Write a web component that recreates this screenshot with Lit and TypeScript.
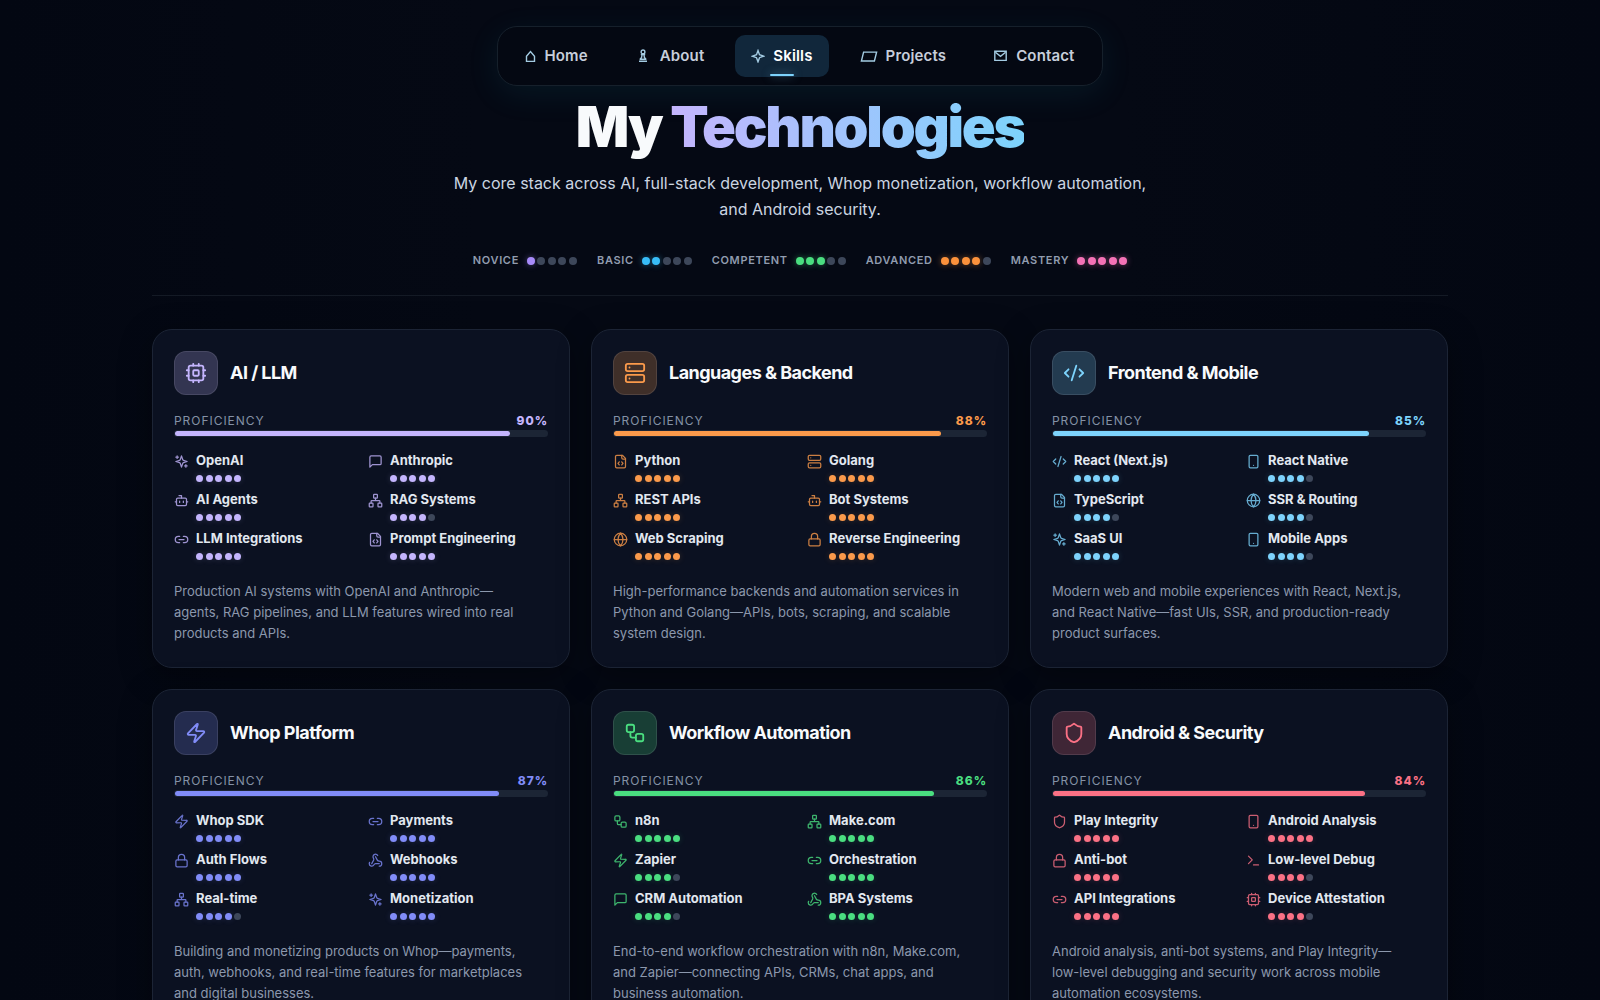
import { LitElement, html, css, svg, type SVGTemplateResult } from "lit";
import { customElement, property } from "lit/decorators.js";

const icons = {
  cpu: svg`<rect x="4" y="4" width="16" height="16" rx="2"/><rect x="9" y="9" width="6" height="6" rx="1"/><path d="M15 2v2M15 20v2M2 15h2M2 9h2M20 15h2M20 9h2M9 2v2M9 20v2"/>`,
  server: svg`<rect x="2" y="2" width="20" height="8" rx="2"/><rect x="2" y="14" width="20" height="8" rx="2"/><path d="M6 6h.01M6 18h.01"/>`,
  code: svg`<path d="m18 16 4-4-4-4"/><path d="m6 8-4 4 4 4"/><path d="m14.5 4-5 16"/>`,
  zap: svg`<path d="M4 14a1 1 0 0 1-.78-1.63l9.9-10.2a.5.5 0 0 1 .86.46l-1.92 6.02A1 1 0 0 0 13 10h7a1 1 0 0 1 .78 1.63l-9.9 10.2a.5.5 0 0 1-.86-.46l1.92-6.02A1 1 0 0 0 11 14z"/>`,
  workflow: svg`<rect x="3" y="3" width="8" height="8" rx="2"/><path d="M7 11v4a2 2 0 0 0 2 2h4"/><rect x="13" y="13" width="8" height="8" rx="2"/>`,
  shield: svg`<path d="M20 13c0 5-3.5 7.5-7.66 8.95a1 1 0 0 1-.67-.01C7.5 20.5 4 18 4 13V6a1 1 0 0 1 1-1c2 0 4.5-1.2 6.24-2.72a1.17 1.17 0 0 1 1.52 0C14.51 3.81 17 5 19 5a1 1 0 0 1 1 1z"/>`,
  sparkles: svg`<path d="m12 3-1.912 5.813a2 2 0 0 1-1.275 1.275L3 12l5.813 1.912a2 2 0 0 1 1.275 1.275L12 21l1.912-5.813a2 2 0 0 1 1.275-1.275L21 12l-5.813-1.912a2 2 0 0 1-1.275-1.275L12 3Z"/><path d="M5 3v4M19 17v4M3 5h4M17 19h4"/>`,
  message: svg`<path d="M21 15a2 2 0 0 1-2 2H7l-4 4V5a2 2 0 0 1 2-2h14a2 2 0 0 1 2 2z"/>`,
  bot: svg`<path d="M12 8V4H8"/><rect x="4" y="8" width="16" height="12" rx="2"/><path d="M2 14h2M20 14h2M15 13v2M9 13v2"/>`,
  network: svg`<rect x="16" y="16" width="6" height="6" rx="1"/><rect x="2" y="16" width="6" height="6" rx="1"/><rect x="9" y="2" width="6" height="6" rx="1"/><path d="M5 16v-3a1 1 0 0 1 1-1h12a1 1 0 0 1 1 1v3M12 12V8"/>`,
  link: svg`<path d="M9 17H7A5 5 0 0 1 7 7h2M15 7h2a5 5 0 1 1 0 10h-2M8 12h8"/>`,
  file: svg`<path d="M10 12.5 8 15l2 2.5M14 12.5l2 2.5-2 2.5"/><path d="M14 2v4a2 2 0 0 0 2 2h4"/><path d="M15 2H6a2 2 0 0 0-2 2v16a2 2 0 0 0 2 2h12a2 2 0 0 0 2-2V7z"/>`,
  globe: svg`<circle cx="12" cy="12" r="10"/><path d="M12 2a14.5 14.5 0 0 0 0 20 14.5 14.5 0 0 0 0-20M2 12h20"/>`,
  lock: svg`<rect x="3" y="11" width="18" height="11" rx="2"/><path d="M7 11V7a5 5 0 0 1 10 0v4"/>`,
  phone: svg`<rect x="5" y="2" width="14" height="20" rx="2"/><path d="M12 18h.01"/>`,
  webhook: svg`<path d="M18 16.98h-5.99c-1.1 0-1.95.94-2.48 1.9A4 4 0 0 1 2 17c.01-.7.2-1.4.57-2"/><path d="m6 17 3.13-5.78c.53-.97.1-2.18-.5-3.1a4 4 0 1 1 6.89-4.06"/><path d="m12 6 3.13 5.73C15.66 12.7 16.9 13 18 13a4 4 0 0 1 0 8"/>`,
  terminal: svg`<path d="m4 17 6-6-6-6M12 19h8"/>`,
};

type IconName = keyof typeof icons;
type Skill = [icon: IconName, name: string, level: number];

interface Category {
  tone: string;
  icon: IconName;
  title: string;
  percent: number;
  skills: Skill[];
  text: string;
}

const categories: Category[] = [
  {
    tone: "violet",
    icon: "cpu",
    title: "AI / LLM",
    percent: 90,
    skills: [
      ["sparkles", "OpenAI", 5],
      ["message", "Anthropic", 5],
      ["bot", "AI Agents", 5],
      ["network", "RAG Systems", 4],
      ["link", "LLM Integrations", 5],
      ["file", "Prompt Engineering", 5],
    ],
    text: "Production AI systems with OpenAI and Anthropic—agents, RAG pipelines, and LLM features wired into real products and APIs.",
  },
  {
    tone: "orange",
    icon: "server",
    title: "Languages & Backend",
    percent: 88,
    skills: [
      ["file", "Python", 5],
      ["server", "Golang", 5],
      ["network", "REST APIs", 5],
      ["bot", "Bot Systems", 5],
      ["globe", "Web Scraping", 5],
      ["lock", "Reverse Engineering", 5],
    ],
    text: "High-performance backends and automation services in Python and Golang—APIs, bots, scraping, and scalable system design.",
  },
  {
    tone: "sky",
    icon: "code",
    title: "Frontend & Mobile",
    percent: 85,
    skills: [
      ["code", "React (Next.js)", 5],
      ["phone", "React Native", 4],
      ["file", "TypeScript", 4],
      ["globe", "SSR & Routing", 4],
      ["sparkles", "SaaS UI", 5],
      ["phone", "Mobile Apps", 4],
    ],
    text: "Modern web and mobile experiences with React, Next.js, and React Native—fast UIs, SSR, and production-ready product surfaces.",
  },
  {
    tone: "indigo",
    icon: "zap",
    title: "Whop Platform",
    percent: 87,
    skills: [
      ["zap", "Whop SDK", 5],
      ["link", "Payments", 5],
      ["lock", "Auth Flows", 5],
      ["webhook", "Webhooks", 5],
      ["network", "Real-time", 4],
      ["sparkles", "Monetization", 5],
    ],
    text: "Building and monetizing products on Whop—payments, auth, webhooks, and real-time features for marketplaces and digital businesses.",
  },
  {
    tone: "green",
    icon: "workflow",
    title: "Workflow Automation",
    percent: 86,
    skills: [
      ["workflow", "n8n", 5],
      ["network", "Make.com", 5],
      ["zap", "Zapier", 4],
      ["link", "Orchestration", 5],
      ["message", "CRM Automation", 4],
      ["webhook", "BPA Systems", 5],
    ],
    text: "End-to-end workflow orchestration with n8n, Make.com, and Zapier—connecting APIs, CRMs, chat apps, and business automation.",
  },
  {
    tone: "rose",
    icon: "shield",
    title: "Android & Security",
    percent: 84,
    skills: [
      ["shield", "Play Integrity", 5],
      ["phone", "Android Analysis", 5],
      ["lock", "Anti-bot", 5],
      ["terminal", "Low-level Debug", 4],
      ["link", "API Integrations", 5],
      ["cpu", "Device Attestation", 4],
    ],
    text: "Android analysis, anti-bot systems, and Play Integrity—low-level debugging and security work across mobile automation ecosystems.",
  },
];

const levels: [label: string, tone: string][] = [
  ["Novice", "novice"],
  ["Basic", "basic"],
  ["Competent", "competent"],
  ["Advanced", "advanced"],
  ["Mastery", "mastery"],
];

/** Menu symbols share a 14px height; each one has its own width. */
const links: [label: string, width: number, shape: SVGTemplateResult][] = [
  ["Home", 11, svg`<path d="M1.5 7.2 5.5 2.6l4 4.6v5.2h-8z"/>`],
  [
    "About",
    17,
    svg`<circle cx="8" cy="2.9" r="1.9"/><path d="M5.8 5.6h4.4M7 6l-.4 2.4L5 10.2M9 6l.4 2.4 1.6 1.8M4.6 10.3h6.8M4 12.3h8"/>`,
  ],
  ["Skills", 14, svg`<path d="M7 1.6 8.5 5.7 12.6 7.2 8.5 8.7 7 12.8 5.5 8.7 1.4 7.2 5.5 5.7z"/>`],
  ["Projects", 18, svg`<path d="M3.6 3.1h13L14.4 12h-13z"/>`],
  ["Contact", 15, svg`<path d="M1.8 2.2h11.4v9.2H1.8z"/><path d="m2.4 3.2 5.1 4.2 5.1-4.2"/>`],
];

@customElement("line-icon")
export class LineIcon extends LitElement {
  @property() name: IconName = "cpu";

  static styles = css`
    :host { display: block; }
    .icon { display: block; width: 100%; height: 100%; }
  `;

  render() {
    return html`<svg class="icon" viewBox="0 0 24 24" fill="none" stroke="currentColor"
      stroke-width="2" stroke-linecap="round" stroke-linejoin="round" aria-hidden="true">${icons[this.name]}</svg>`;
  }
}

/** Five dots, coloured with the current text colour up to the level. */
@customElement("level-dots")
export class LevelDots extends LitElement {
  @property({ type: Number }) level = 0;

  static styles = css`
    :host {
      --dot: 7px;
      --glow: 20%;
      display: flex;
      justify-content: space-between;
      width: 45px;
    }
    .dot {
      width: var(--dot);
      height: var(--dot);
      border-radius: 50%;
      background: #3d475a;
    }
    .dot.on {
      background: currentColor;
      box-shadow: 0 0 6px color-mix(in srgb, currentColor var(--glow), transparent);
    }
  `;

  render() {
    return [1, 2, 3, 4, 5].map((n) => html`<span class="dot ${n <= this.level ? "on" : ""}"></span>`);
  }
}

@customElement("skill-card")
export class SkillCard extends LitElement {
  @property({ attribute: false }) data!: Category;

  static styles = css`
    :host { display: grid; }
    .card {
      box-sizing: border-box;
      padding: 21px;
      border: 1px solid #1c2435;
      border-radius: 20px;
      background: #0b1121;
      box-shadow: 0 8px 32px rgba(0, 0, 0, 0.35);
    }
    .violet { --tone: #c4b5fd; }
    .orange { --tone: #fb9a4b; }
    .sky { --tone: #7dd3fc; }
    .indigo { --tone: #818cf8; }
    .green { --tone: #4ade80; }
    .rose { --tone: #fb7185; }
    .head {
      display: flex;
      align-items: center;
      gap: 12px;
      margin-bottom: 16px;
    }
    .badge {
      display: grid;
      place-items: center;
      box-sizing: border-box;
      width: 44px;
      height: 44px;
      border: 1px solid rgba(255, 255, 255, 0.1);
      border-radius: 12px;
      color: var(--tone);
      background: color-mix(in srgb, var(--tone) 22%, transparent);
    }
    .badge line-icon { width: 22px; height: 22px; }
    .title {
      margin: 0;
      font-size: 18px;
      line-height: 24px;
      font-weight: 700;
      letter-spacing: -0.03em;
      color: #f8fafc;
    }
    .meter-row {
      display: flex;
      justify-content: space-between;
      font-size: 12px;
      line-height: 19px;
      letter-spacing: 0.08em;
      color: #8491a6;
    }
    .percent { font-weight: 800; color: var(--tone); }
    .track {
      box-sizing: border-box;
      height: 7px;
      padding: 1px;
      border-radius: 4px;
      background: #1c2535;
    }
    .fill {
      height: 5px;
      border-radius: 3px;
      background: var(--tone);
    }
    .skills {
      display: grid;
      grid-template-columns: 1fr 1fr;
      gap: 8px 14px;
      margin: 14px 0 21px;
      padding: 0;
      list-style: none;
    }
    .skill { display: flex; gap: 7px; }
    .skill line-icon {
      width: 15px;
      height: 15px;
      margin-top: 3px;
      color: var(--tone);
      opacity: 0.8;
    }
    .skill-body { display: grid; gap: 6px; }
    .skill-name {
      font-size: 13px;
      line-height: 18px;
      font-weight: 700;
      color: #e2e8f0;
      white-space: nowrap;
    }
    .skill level-dots { color: var(--tone); }
    .text {
      margin: 0;
      padding: 0 14px 2px 0;
      font-size: 13px;
      line-height: 21px;
      color: #8c98ad;
    }
  `;

  render() {
    const { tone, icon, title, percent, skills, text } = this.data;
    return html`
      <article class="card ${tone}">
        <header class="head">
          <span class="badge"><line-icon .name=${icon}></line-icon></span>
          <h2 class="title">${title}</h2>
        </header>
        <div class="meter-row">
          <span>PROFICIENCY</span><span class="percent">${percent}%</span>
        </div>
        <div class="track"><div class="fill" style="width:${percent}%"></div></div>
        <ul class="skills">
          ${skills.map(
            ([glyph, name, level]) => html`
              <li class="skill">
                <line-icon .name=${glyph}></line-icon>
                <div class="skill-body">
                  <span class="skill-name">${name}</span>
                  <level-dots .level=${level}></level-dots>
                </div>
              </li>`,
          )}
        </ul>
        <p class="text">${text}</p>
      </article>
    `;
  }
}

@customElement("app-root")
export class AppRoot extends LitElement {
  static styles = css`
    :host {
      display: block;
      min-height: 100vh;
      font-family: Inter, "Liberation Sans", sans-serif;
      color: #f8fafc;
      background: linear-gradient(90deg, #030712 0%, #050914 30%, #050914 70%, #030712 100%);
    }
    .page {
      display: flex;
      flex-direction: column;
      align-items: center;
      box-sizing: border-box;
      padding: 26px 24px 40px;
    }
    .nav {
      display: flex;
      gap: 15px;
      padding: 8px 11px;
      border: 1px solid #16202b;
      border-radius: 20px;
      background: #040812;
      box-shadow: 0 8px 32px rgba(34, 160, 180, 0.1);
    }
    .nav-link {
      position: relative;
      display: flex;
      align-items: center;
      gap: 8px;
      padding: 0 16px;
      border-radius: 10px;
      font-size: 15px;
      line-height: 42px;
      font-weight: 600;
      letter-spacing: 0.01em;
      color: #c7cedb;
      text-decoration: none;
    }
    .nav-link.active { color: #fff; background: #11273b; }
    .nav-link.active::after {
      content: "";
      position: absolute;
      left: 50%;
      bottom: 1px;
      width: 24px;
      height: 2px;
      margin-left: -12px;
      border-radius: 1px;
      background: #7dd3fc;
      box-shadow: 0 0 8px rgba(125, 211, 252, 0.5);
    }
    .glyph {
      flex: none;
      fill: none;
      stroke: #a3cbe2;
      stroke-width: 1.4;
    }
    .heading {
      margin: 11px 0 13px;
      font-size: 56px;
      line-height: 60px;
      font-weight: 900;
      letter-spacing: -0.04em;
    }
    .accent {
      color: transparent;
      background: linear-gradient(90deg, #c4b5fd, #7dd3fc);
      background-clip: text;
      -webkit-background-clip: text;
    }
    .lead {
      max-width: 720px;
      margin: 0;
      font-size: 16px;
      line-height: 26px;
      text-align: center;
      color: #cbd5e1;
    }
    .levels {
      display: flex;
      flex-wrap: wrap;
      justify-content: center;
      gap: 20px;
      margin: 29px 0 26px;
      padding: 0;
      list-style: none;
    }
    .level {
      display: flex;
      align-items: center;
      gap: 8px;
      font-size: 11px;
      line-height: 18px;
      font-weight: 600;
      letter-spacing: 0.06em;
      text-transform: uppercase;
    }
    .level-label { color: #919caf; }
    .level level-dots { --dot: 8px; --glow: 45%; width: 50px; margin-top: 2px; }
    .novice { color: #a78bfa; }
    .basic { color: #38bdf8; }
    .competent { color: #4ade80; }
    .advanced { color: #fb923c; }
    .mastery { color: #f472b6; }
    .grid {
      display: grid;
      grid-template-columns: repeat(auto-fit, minmax(min(100%, 380px), 1fr));
      gap: 21px;
      box-sizing: border-box;
      width: 100%;
      max-width: 1296px;
      padding-top: 33px;
      border-top: 1px solid #141a25;
    }
  `;

  render() {
    return html`
      <div class="page">
        <nav class="nav" aria-label="Main">
          ${links.map(
            ([label, width, shape]) => html`
              <a class="nav-link ${label === "Skills" ? "active" : ""}" href="#${label.toLowerCase()}">
                <svg class="glyph" width=${width} height="14" viewBox="0 0 ${width} 14" aria-hidden="true">${shape}</svg>
                <span>${label}</span>
              </a>`,
          )}
        </nav>
        <h1 class="heading">My <span class="accent">Technologies</span></h1>
        <p class="lead">
          My core stack across AI, full-stack development, Whop monetization, workflow automation, and Android security.
        </p>
        <ul class="levels">
          ${levels.map(
            ([label, tone], i) => html`
              <li class="level ${tone}">
                <span class="level-label">${label}</span><level-dots .level=${i + 1}></level-dots>
              </li>`,
          )}
        </ul>
        <main class="grid">
          ${categories.map((c) => html`<skill-card .data=${c}></skill-card>`)}
        </main>
      </div>
    `;
  }
}
